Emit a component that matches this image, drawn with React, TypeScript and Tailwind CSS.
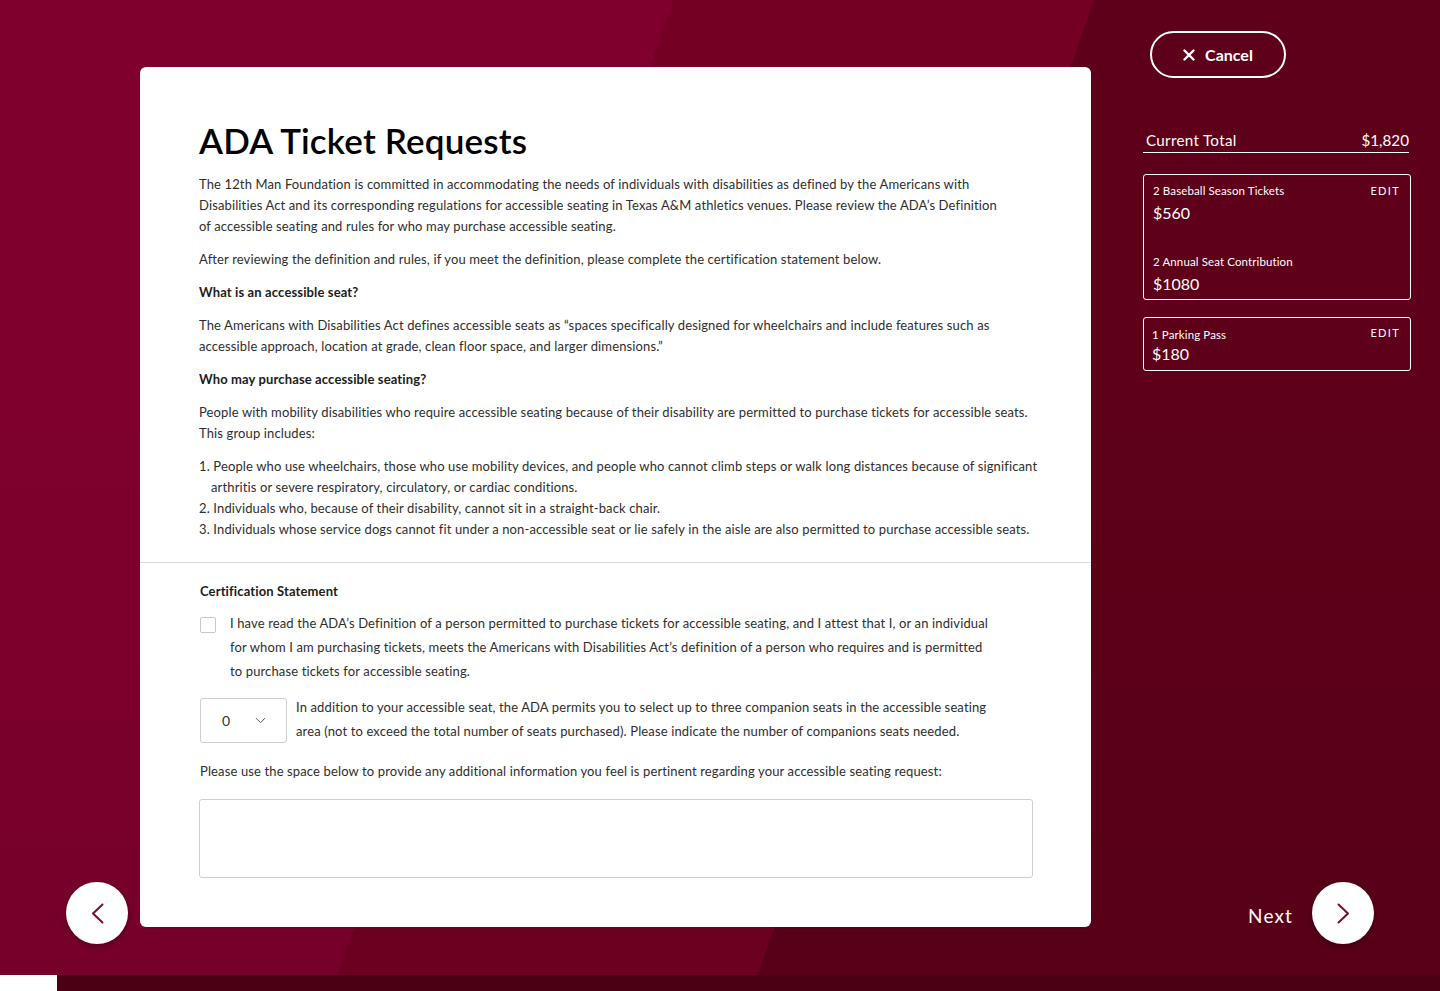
import { ChevronDown } from "lucide-react";

const BODY = "font-['Lato','Liberation_Sans',sans-serif]";

function Chevron({ dir }: { dir: "left" | "right" }) {
  return (
    <svg width="15" height="21" viewBox="0 0 15 21" fill="none">
      <path
        d={dir === "left" ? "M12.5 1.5 L3 10.5 L12.5 19.5" : "M2.5 1.5 L12 10.5 L2.5 19.5"}
        stroke="#7a0a2c"
        strokeWidth="2"
        strokeLinecap="round"
        strokeLinejoin="round"
      />
    </svg>
  );
}

function CartCard({ items }: { items: { label: string; price: string }[] }) {
  return (
    <div className="relative rounded-[3px] border border-white px-[9px] pt-[8px] pb-[4px] text-white">
      <span className="absolute right-[10px] top-[8px] text-[11px] leading-[16px] tracking-[0.12em]">EDIT</span>
      {items.map((it, i) => (
        <div key={i} className={i > 0 ? "mt-[30px]" : ""}>
          <div className="text-[11.5px] leading-[16px] tracking-[0.01em]">{it.label}</div>
          <div className="mt-[2px] text-[16px] leading-[23px]">{it.price}</div>
        </div>
      ))}
    </div>
  );
}

export default function App() {
  return (
    <div
      className={`${BODY} flex h-[991px] w-full flex-col overflow-hidden bg-[linear-gradient(to_bottom,rgba(0,0,0,0)_40%,rgba(0,0,0,0.08)),linear-gradient(109deg,#7f002d_0_37.8%,#740024_37.8%_61.4%,#5e0019_61.4%)]`}
    >
      <div className="flex flex-1">
        {/* back button */}
        <div className="flex w-[140px] shrink-0 flex-col items-end justify-end pb-[31px] pr-[12px]">
          <button className="flex h-[62px] w-[62px] items-center justify-center rounded-full bg-white shadow-[0_2px_6px_rgba(0,0,0,0.3)]">
            <Chevron dir="left" />
          </button>
        </div>

        {/* main card */}
        <div className="mt-[67px] flex h-[860px] w-[951px] shrink-0 flex-col rounded-[6px] bg-white">
          <div className="px-[59px] pt-[53px] pb-[22px] text-[13px] leading-[21px] tracking-[0.01em] text-[#2e2e2e]">
            <h1 className="text-[35px] font-semibold leading-[40px] tracking-[0.005em] text-black">ADA Ticket Requests</h1>
            <div className="mt-[14px] w-[860px] space-y-3">
              <p>
                The 12th Man Foundation is committed in accommodating the needs of individuals with disabilities as defined by the Americans with
                <br />
                Disabilities Act and its corresponding regulations for accessible seating in Texas A&amp;M athletics venues. Please review the ADA’s Definition
                <br />
                of accessible seating and rules for who may purchase accessible seating.
              </p>
              <p>After reviewing the definition and rules, if you meet the definition, please complete the certification statement below.</p>
              <p className="font-bold text-[#1c1c1c]">What is an accessible seat?</p>
              <p>
                The Americans with Disabilities Act defines accessible seats as “spaces specifically designed for wheelchairs and include features such as
                <br />
                accessible approach, location at grade, clean floor space, and larger dimensions.”
              </p>
              <p className="font-bold text-[#1c1c1c]">Who may purchase accessible seating?</p>
              <p>
                People with mobility disabilities who require accessible seating because of their disability are permitted to purchase tickets for accessible seats.
                <br />
                This group includes:
              </p>
              <ol>
                <li className="pl-[12px] -indent-[12px]">
                  1. People who use wheelchairs, those who use mobility devices, and people who cannot climb steps or walk long distances because of significant
                  <br />
                  arthritis or severe respiratory, circulatory, or cardiac conditions.
                </li>
                <li className="pl-[12px] -indent-[12px]">2. Individuals who, because of their disability, cannot sit in a straight-back chair.</li>
                <li className="pl-[12px] -indent-[12px]">
                  3. Individuals whose service dogs cannot fit under a non-accessible seat or lie safely in the aisle are also permitted to purchase accessible seats.
                </li>
              </ol>
            </div>
          </div>

          <div className="border-t border-[#d9d9d9] px-[60px] pt-[18px] text-[13px] tracking-[0.01em] text-[#2e2e2e]">
            <p className="font-bold leading-[21px] text-[#1c1c1c]">Certification Statement</p>
            <div className="mt-[9px] flex items-start gap-[14px]">
              <span className="mt-[6px] h-[16px] w-[16px] shrink-0 rounded-[2px] border border-[#c8c8c8] bg-white" />
              <p className="w-[800px] leading-[24px]">
                I have read the ADA’s Definition of a person permitted to purchase tickets for accessible seating, and I attest that I, or an individual
                <br />
                for whom I am purchasing tickets, meets the Americans with Disabilities Act’s definition of a person who requires and is permitted
                <br />
                to purchase tickets for accessible seating.
              </p>
            </div>
            <div className="mt-3 flex items-start gap-[9px]">
              <div className="mt-[3px] flex h-[45px] w-[87px] shrink-0 items-center justify-between rounded-[3px] border border-[#cfcfcf] pl-[21px] pr-[17px]">
                <span className="text-[14px] text-[#333]">0</span>
                <ChevronDown className="h-[17px] w-[17px] text-[#555]" strokeWidth={1.4} />
              </div>
              <p className="w-[740px] leading-[24px]">
                In addition to your accessible seat, the ADA permits you to select up to three companion seats in the accessible seating
                <br />
                area (not to exceed the total number of seats purchased). Please indicate the number of companions seats needed.
              </p>
            </div>
            <p className="mt-4 leading-[24px]">
              Please use the space below to provide any additional information you feel is pertinent regarding your accessible seating request:
            </p>
            <div className="mt-4 -ml-px h-[79px] w-[834px] rounded-[3px] border border-[#cfcfcf]" />
          </div>
        </div>

        {/* right panel */}
        <div className="flex flex-1 flex-col pl-[52px] pr-[29px] pt-[31px] pb-[31px] text-white">
          <button className="ml-[7px] flex h-[47px] w-[136px] items-center justify-center gap-[10px] rounded-full border-2 border-white">
            <svg width="12" height="12" viewBox="0 0 12 12">
              <path d="M1.5 1.5 L10.5 10.5 M10.5 1.5 L1.5 10.5" stroke="white" strokeWidth="2.4" strokeLinecap="round" />
            </svg>
            <span className="text-[16px] font-bold">Cancel</span>
          </button>

          <div className="mt-[52px] flex w-[266px] items-end justify-between border-b border-white pb-[2px] pl-[3px] text-[15.2px] leading-[20px]">
            <span className="tracking-[0.02em]">Current Total</span>
            <span>$1,820</span>
          </div>

          <div className="mt-[21px] w-[268px]">
            <CartCard
              items={[
                { label: "2 Baseball Season Tickets", price: "$560" },
                { label: "2 Annual Seat Contribution", price: "$1080" },
              ]}
            />
          </div>
          <div className="mt-[17px] w-[268px]">
            <div className="relative rounded-[3px] border border-white px-[8px] pt-[9px] pb-[5px]">
              <span className="absolute right-[10px] top-[7px] text-[11px] leading-[16px] tracking-[0.12em]">EDIT</span>
              <div className="text-[11.5px] leading-[16px] tracking-[0.01em]">1 Parking Pass</div>
              <div className="text-[16px] leading-[22px]">$180</div>
            </div>
          </div>

          <div className="mt-auto mr-[37px] flex items-center justify-end gap-[19px]">
            <span className="pt-[6px] text-[19px] tracking-[0.06em]">Next</span>
            <button className="flex h-[62px] w-[62px] items-center justify-center rounded-full bg-white shadow-[0_2px_6px_rgba(0,0,0,0.3)]">
              <Chevron dir="right" />
            </button>
          </div>
        </div>
      </div>

      {/* footer edge */}
      <div className="flex h-[16px] bg-[#4c0013]">
        <div className="h-full w-[57px] bg-white" />
      </div>
    </div>
  );
}
